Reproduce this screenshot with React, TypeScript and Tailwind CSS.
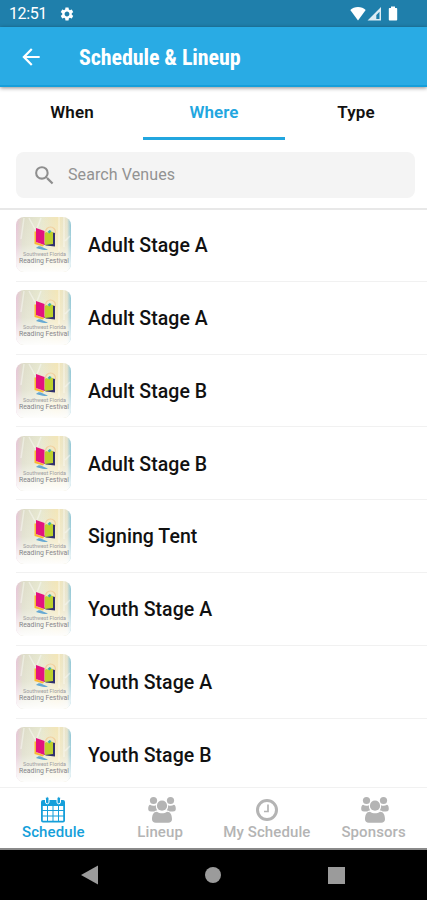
import { MdArrowBack, MdSearch, MdSettings } from "react-icons/md";

const venues = [
  "Adult Stage A",
  "Adult Stage A",
  "Adult Stage B",
  "Adult Stage B",
  "Signing Tent",
  "Youth Stage A",
  "Youth Stage A",
  "Youth Stage B",
];

const tabs = ["When", "Where", "Type"];

function StatusIcons() {
  return (
    <svg width="49" height="15" viewBox="0 0 49 15" fill="#fff">
      <path d="M8 14.4.3 4.1C2.2 2.2 5 1 8 1s5.800 1.200 7.700 3.100z" />
      <path
        fillRule="evenodd"
        d="M31 1v13.500H17.500zM29.500 5.800 26.300 9v4h3.200z"
        opacity=".85"
      />
      <path d="M41 .5h4v1.500h1.200c.6 0 1 .4 1 1v10.500c0 .6-.4 1-1 1h-6.400c-.6 0-1-.4-1-1V3c0-.6.4-1 1-1H41z" />
    </svg>
  );
}

function FestivalLogo() {
  return (
    <svg width="55" height="55" viewBox="0 0 55 55" className="shrink-0 rounded-lg">
      <defs>
        <linearGradient id="sky" x1="0" x2="1" y1="0" y2="0">
          <stop offset="0" stopColor="#e6c4d6" />
          <stop offset=".12" stopColor="#dddcc8" />
          <stop offset=".45" stopColor="#e7e8d0" />
          <stop offset=".75" stopColor="#f3e6b8" />
          <stop offset=".93" stopColor="#e6e3cd" />
          <stop offset="1" stopColor="#86c3d6" />
        </linearGradient>
        <linearGradient id="fade" x1="0" x2="0" y1="0" y2="1">
          <stop offset="0" stopColor="#fff" stopOpacity="0" />
          <stop offset=".5" stopColor="#fff" stopOpacity=".2" />
          <stop offset=".85" stopColor="#fff" stopOpacity=".75" />
          <stop offset="1" stopColor="#fff" stopOpacity=".95" />
        </linearGradient>
      </defs>
      <rect width="55" height="55" fill="url(#sky)" />
      <path
        d="M8 1 5 22M13 1l6 11M25 1l-5 13M43 0v34M48 0v30M54 19l-5 5"
        stroke="#fff"
        strokeWidth="1.500"
        opacity=".4"
      />
      <rect width="55" height="55" fill="url(#fade)" />
      <circle cx="34.500" cy="15" r="5" fill="none" stroke="#f2cf9e" strokeWidth="1.200" />
      <path d="M18.500 14.500h2v11l7.500 2.500-1 1.500-8.500-2.500z" fill="#fbb832" />
      <path d="M37 15.500l2 .5v13.500l-9-1-2-1z" fill="#31316f" />
      <path d="M20 11l8.500 3v14L20 25z" fill="#e3127e" />
      <path d="M28.800 16l2-1 1.500 1 2-1.500 2.700.5v12l-8.200 1z" fill="#bdd02d" />
      <path d="M31.500 15l2-2 2 1-1.800 2.500z" fill="#3bb3a5" />
      <path d="M20 31c4-4 6 0 12 1.500-5 1.500-7-.5-12-1.500z" fill="#67a9d3" />
      <text
        x="7"
        y="39"
        fontSize="5.500"
        textLength="43"
        lengthAdjust="spacingAndGlyphs"
        fill="#9c9ca0"
      >
        Southwest Florida
      </text>
      <text
        x="3"
        y="46"
        fontSize="6.500"
        textLength="50"
        lengthAdjust="spacingAndGlyphs"
        fill="#85858a"
      >
        Reading Festival
      </text>
    </svg>
  );
}

function CalendarIcon() {
  return (
    <svg width="26" height="27" viewBox="0 0 26 27" fill="currentColor">
      <path
        fillRule="evenodd"
        d="M3 4h20a2 2 0 0 1 2 2v18.500a2 2 0 0 1-2 2H3a2 2 0 0 1-2-2V6a2 2 0 0 1 2-2zM2.800 10v4h4.200v-4zM8 10v4h4.500v-4zM13.500 10v4H18v-4zM19 10v4h4.200v-4zM2.800 15v4.500h4.200V15zM8 15v4.500h4.500V15zM13.500 15v4.500H18V15zM19 15v4.500h4.200V15zM2.800 20.500v4.200h4.200v-4.200zM8 20.500v4.200h4.500v-4.200zM13.500 20.500v4.200H18v-4.200zM19 20.500v4.200h4.200v-4.200z"
      />
      <rect x="5.500" y=".8" width="3.500" height="7" rx="1.700" stroke="#fff" />
      <rect x="17" y=".8" width="3.500" height="7" rx="1.700" stroke="#fff" />
    </svg>
  );
}

function UsersIcon() {
  return (
    <svg width="28" height="27" viewBox="0 0 28 27" fill="currentColor" className="ml-[3px]">
      <circle cx="5.500" cy="4.500" r="3.600" />
      <circle cx="22.500" cy="4.500" r="3.600" />
      <path d="M2 8.800c2 1.300 4.200 1.300 6 .5-.3 2 .2 3.600 1.300 5-1.300.1-2.300.6-3.100 1.300H3c-1.700 0-2.800-.8-2.800-2.500 0-2 .4-3.800 1.800-4.300zM26 8.800c-2 1.300-4.200 1.300-6 .5.3 2-.2 3.600-1.300 5 1.300.1 2.300.6 3.100 1.300H25c1.700 0 2.800-.8 2.800-2.500 0-2-.4-3.800-1.800-4.300z" />
      <circle cx="14" cy="9.700" r="5.100" />
      <path d="M9 15.700c3 2.200 7 2.200 10 0 3.600 0 5 3.500 5 7.500 0 2.200-1.500 3.500-3.700 3.500H7.700C5.500 26.700 4 25.400 4 23.200c0-4 1.400-7.500 5-7.500z" />
    </svg>
  );
}

function ClockIcon() {
  return (
    <svg width="24" height="27" viewBox="0 0 24 27" fill="none" stroke="currentColor" className="ml-px">
      <circle cx="12" cy="14" r="9.500" strokeWidth="3" />
      <path d="M13 8.500v7H9" strokeWidth="1.700" />
    </svg>
  );
}

const menu = [
  { label: "Schedule", icon: <CalendarIcon />, classes: "text-[#159fda]" },
  { label: "Lineup", icon: <UsersIcon />, classes: "text-[#b4b4b4]" },
  { label: "My Schedule", icon: <ClockIcon />, classes: "text-[#b4b4b4]" },
  { label: "Sponsors", icon: <UsersIcon />, classes: "text-[#b4b4b4]" },
];

export default function App() {
  return (
    <div className="flex h-[900px] w-full flex-col overflow-hidden bg-white font-[Roboto,sans-serif]">
      <div className="flex h-[27px] shrink-0 items-center bg-[#1f7fab] pr-[28px] pl-[9px] text-white">
        <span className="pt-px text-[16px] leading-none tracking-[-0.4px]">12:51</span>
        <MdSettings className="ml-3 size-4" />
        <div className="ml-auto">
          <StatusIcons />
        </div>
      </div>

      <header className="relative z-10 flex h-[60px] shrink-0 items-center border-b-2 border-[#159fda] bg-[#29abe4] pt-0.5 pl-[18px] text-white shadow-[0_1px_4px_rgba(0,0,0,0.45)]">
        <MdArrowBack className="size-[26px]" />
        <h1 className="ml-[35px] pt-px text-[22px] leading-none font-bold tracking-[-0.1px] [font-stretch:75%]">
          Schedule &amp; Lineup
        </h1>
      </header>

      <div className="flex h-[53px] shrink-0 pl-px">
        {tabs.map((tab) => (
          <button
            key={tab}
            type="button"
            className={
              tab === "Where"
                ? "flex-1 border-b-3 border-[#22a6df] pt-0.5 text-[17px] font-semibold tracking-[0.1px] text-[#22a6df]"
                : "flex-1 border-b-3 border-transparent pt-0.5 text-[17px] font-semibold tracking-[0.1px] text-[#111]"
            }
          >
            {tab}
          </button>
        ))}
      </div>

      <div className="h-[70px] shrink-0 border-b-2 border-[#e8e8e8] pt-3 pr-3 pl-4">
        <div className="flex h-[46px] items-center rounded-lg bg-[#f4f4f4] pl-4">
          <MdSearch className="size-[25px] text-[#8e8e8e]" />
          <input
            type="text"
            placeholder="Search Venues"
            className="ml-[11px] w-60 bg-transparent text-[16px] tracking-[0.1px] placeholder:text-[#929292] focus:outline-none"
          />
        </div>
      </div>

      <ul className="-mt-px min-h-0 flex-1 overflow-hidden pl-4">
        {venues.map((venue, i) => (
          <li
            key={i}
            className="flex h-[72.800px] items-center border-b border-[#f1f1f1]"
          >
            <FestivalLogo />
            <span className="ml-[17px] pt-0.5 text-[19.500px] font-medium tracking-[0.050px] text-[#111]">
              {venue}
            </span>
          </li>
        ))}
      </ul>

      <nav className="flex h-[63px] shrink-0 border-t border-b-2 border-t-[#f1f1f1] border-b-[#8a8a8a]">
        {menu.map((item) => (
          <button
            key={item.label}
            type="button"
            className={"flex flex-1 basis-0 flex-col items-center pt-2 " + item.classes}
          >
            {item.icon}
            <span className="pt-px text-[15px] leading-[17px] font-medium tracking-[0.1px] whitespace-nowrap">
              {item.label}
            </span>
          </button>
        ))}
      </nav>

      <div className="flex h-[50px] shrink-0 items-center justify-between bg-black pr-[82px] pl-[81px]">
        <svg width="17" height="20" viewBox="0 0 17 20" fill="#9b9b9b">
          <path d="M17 .5v19L0 10z" />
        </svg>
        <div className="size-4 rounded-full bg-[#9b9b9b]" />
        <div className="size-[17px] bg-[#9b9b9b]" />
      </div>
    </div>
  );
}
